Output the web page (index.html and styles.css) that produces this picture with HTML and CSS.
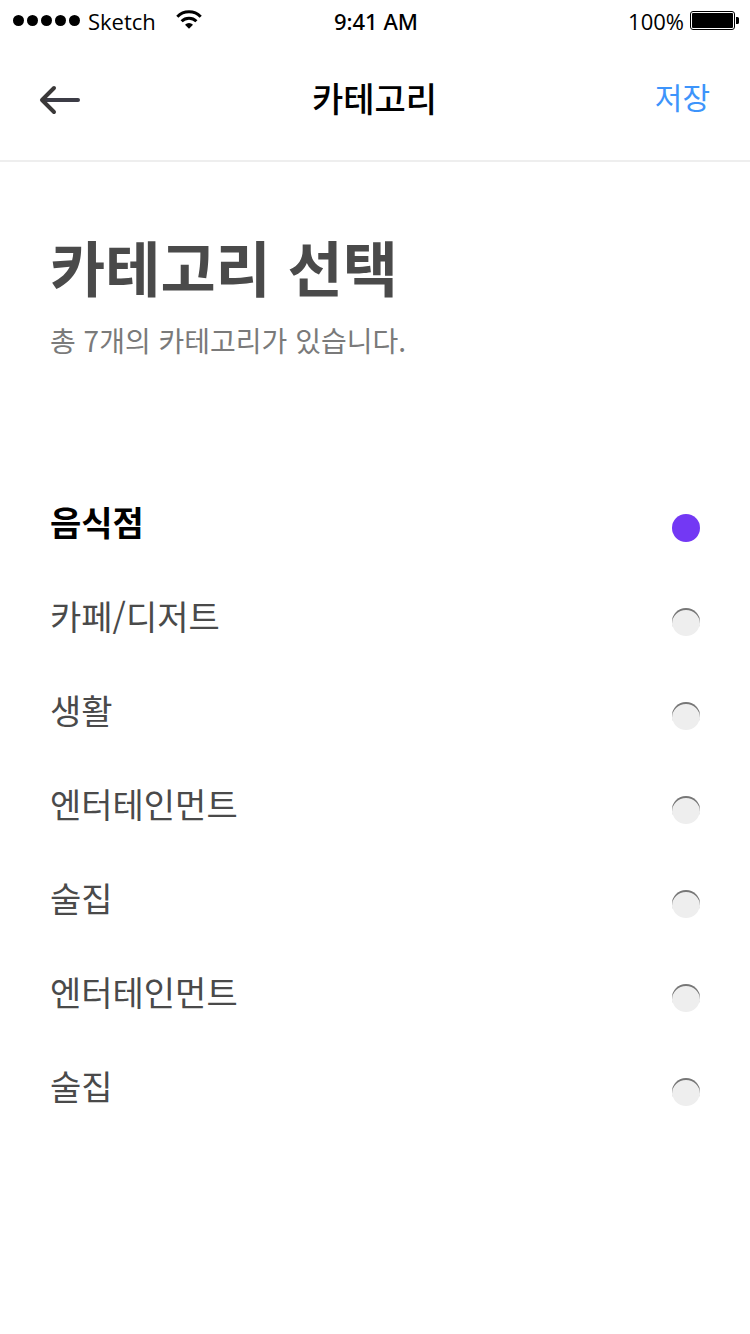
FILE: index.html
```html
<!DOCTYPE html>
<html lang="ko">
<head>
<meta charset="utf-8">
<meta name="viewport" content="width=device-width, initial-scale=1">
<title>카테고리</title>
<link rel="stylesheet" href="styles.css">
</head>
<body>
<div class="status">
  <div class="status-left">
    <svg class="signal" width="68" height="12" viewBox="0 0 68 12" aria-hidden="true"><circle cx="6.500" cy="6.500" r="5.500"/><circle cx="20.500" cy="6.500" r="5.500"/><circle cx="34.500" cy="6.500" r="5.500"/><circle cx="48.500" cy="6.500" r="5.500"/><circle cx="62.500" cy="6.500" r="5.500"/></svg>
    <span class="status-text">Sketch</span>
    <svg class="wifi" width="26" height="20" viewBox="0 0 26 20" aria-hidden="true"><path d="M1.300 6.700a16.500 16.500 0 0 1 23.400 0M5.600 11.300a10.600 10.600 0 0 1 14.800 0" fill="none" stroke="#000" stroke-width="3"/><path d="M9 14.700a5.800 5.800 0 0 1 8 0L13 18.700z"/></svg>
  </div>
  <span class="status-text status-time">9:41 AM</span>
  <div class="status-right">
    <span class="status-text">100%</span>
    <svg class="battery" width="50" height="20" viewBox="0 0 50 20" aria-hidden="true"><rect x=".5" y="1.500" width="44" height="18" rx="2.500" fill="none" stroke="#000"/><rect x="2" y="3" width="41" height="15" rx="1"/><path d="M46 7h1.500a1.500 1.500 0 0 1 1.500 1.500v4a1.500 1.500 0 0 1-1.500 1.500H46z"/></svg>
  </div>
</div>
<header class="nav">
  <button class="back" type="button" aria-label="뒤로">
    <svg width="42" height="30" viewBox="0 0 42 30" aria-hidden="true"><g fill="none" stroke-width="4" stroke-linecap="round" stroke-linejoin="round"><path d="M4 15h35" stroke="#3c3c46"/><path d="M15 3L3 15l12 12" stroke="#3a3838"/></g></svg>
  </button>
  <h1 class="nav-title">카테고리</h1>
  <button class="save" type="submit" form="categories">저장</button>
</header>
<main class="content">
  <h2 class="heading">카테고리 선택</h2>
  <p class="summary">총 7개의 카테고리가 있습니다.</p>
  <form class="list" id="categories">
    <label class="row"><input class="radio" type="radio" name="category" checked><span class="name">음식점</span></label>
    <label class="row"><input class="radio" type="radio" name="category"><span class="name">카페/디저트</span></label>
    <label class="row"><input class="radio" type="radio" name="category"><span class="name">생활</span></label>
    <label class="row"><input class="radio" type="radio" name="category"><span class="name">엔터테인먼트</span></label>
    <label class="row"><input class="radio" type="radio" name="category"><span class="name">술집</span></label>
    <label class="row"><input class="radio" type="radio" name="category"><span class="name">엔터테인먼트</span></label>
    <label class="row"><input class="radio" type="radio" name="category"><span class="name">술집</span></label>
  </form>
</main>
</body>
</html>
```
FILE: styles.css
```css
* { box-sizing: border-box; }
body {
  margin: 0;
  background: #fff;
  color: #4a4a4a;
  font-family: "Noto Sans CJK KR", sans-serif;
}
button {
  padding: 0;
  border: 0;
  background: none;
  font: inherit;
  cursor: pointer;
}
.status, .nav {
  display: grid;
  grid-template-columns: 1fr auto 1fr;
  align-items: center;
}
.status {
  height: 40px;
  padding: 0 10px 0 12px;
  color: #000;
  font-family: "Open Sans", sans-serif;
  font-size: 22px;
  line-height: 38px;
}
.status-left, .status-right {
  display: flex;
  align-items: center;
}
.status-left { gap: 8px; }
.status-right { justify-content: flex-end; gap: 6px; }
.status-text { padding-top: 2px; }
.status-time {
  font-family: "Noto Sans", sans-serif;
  font-weight: 500;
}
.wifi { margin-left: 12px; }
.nav {
  height: 122px;
  padding: 0 40px 0 39px;
  border-bottom: 2px solid #eee;
}
.back { justify-self: start; }
.back svg { display: block; }
.nav-title {
  margin: 0;
  padding-bottom: 4px;
  color: #000;
  font-size: 34px;
  font-weight: 500;
  line-height: 48px;
}
.save {
  justify-self: end;
  padding-bottom: 8px;
  color: #3d94fb;
  font-size: 30px;
  line-height: 48px;
}
.content { padding: 58px 50px; }
.heading {
  margin: 0;
  font-size: 60px;
  font-weight: 700;
  line-height: 92px;
}
.summary {
  margin: 0;
  color: #7a7a7a;
  font-size: 28px;
  line-height: 56px;
}
.list { padding-top: 113px; }
.row {
  display: flex;
  flex-direction: row-reverse;
  justify-content: space-between;
  align-items: center;
  height: 94px;
  cursor: pointer;
}
.name {
  padding-bottom: 12px;
  font-size: 34px;
  line-height: 50px;
}
.radio {
  appearance: none;
  width: 28px;
  height: 28px;
  margin: 0;
  border-radius: 50%;
  background: #eee;
  box-shadow: inset 0 2px 0 #777;
}
.radio:checked {
  background: #7338f4;
  box-shadow: none;
}
.radio:checked + .name {
  color: #000;
  font-weight: 700;
}
```
